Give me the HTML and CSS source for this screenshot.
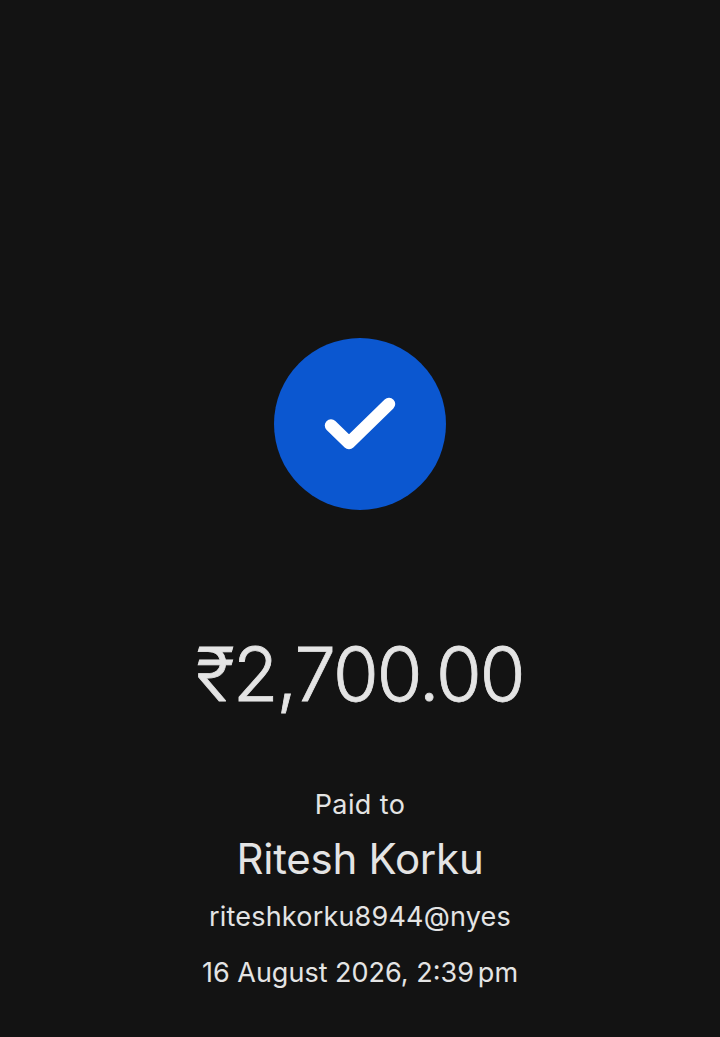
FILE: index.html
```html
<!DOCTYPE html>
<html lang="en">
<head>
<meta charset="utf-8">
<title>Payment</title>
<link rel="stylesheet" href="styles.css">
</head>
<body>
<main class="screen">
  <div class="badge">
    <svg class="check" width="72" height="54" viewBox="0 0 72 54"><path d="M7 28.5 L25 46 L65 7" fill="none" stroke="#fff" stroke-width="12.5" stroke-linecap="round" stroke-linejoin="round"/></svg>
  </div>
  <div class="amount">₹2,700.00</div>
  <div class="label">Paid to</div>
  <div class="name">Ritesh Korku</div>
  <div class="line upi">riteshkorku8944@nyes</div>
  <div class="line date">16 August 2026, 2:39<span class="thin"> </span>pm</div>
</main>
</body>
</html>
```
FILE: styles.css
```css
html, body { margin: 0; padding: 0; background: #131313; }
.screen {
  width: 720px; height: 1037px; box-sizing: border-box;
  padding-top: 338px;
  display: flex; flex-direction: column; align-items: center;
  font-family: Inter, sans-serif;
  color: #e4e4e4; background: #131313;
}
.badge {
  width: 172px; height: 172px; border-radius: 50%; background: #0b57d0;
  display: flex; align-items: center; justify-content: center;
}
.check { width: 72px; height: 54px; }
.amount { margin-top: 122px; font-size: 74px; line-height: 84px; font-weight: 300; letter-spacing: -1.85px; -webkit-text-stroke: 0.8px #e4e4e4; }
.label { margin-top: 71px; font-size: 27px; line-height: 36px; letter-spacing: 0.4px; }
.name { margin-top: 8px; font-size: 42px; line-height: 56px; letter-spacing: -0.25px; }
.line { font-size: 27px; line-height: 36px; }
.upi { margin-top: 12px; letter-spacing: 0.2px; }
.date { margin-top: 20px; }
.thin { font-size: 14px; }
```
